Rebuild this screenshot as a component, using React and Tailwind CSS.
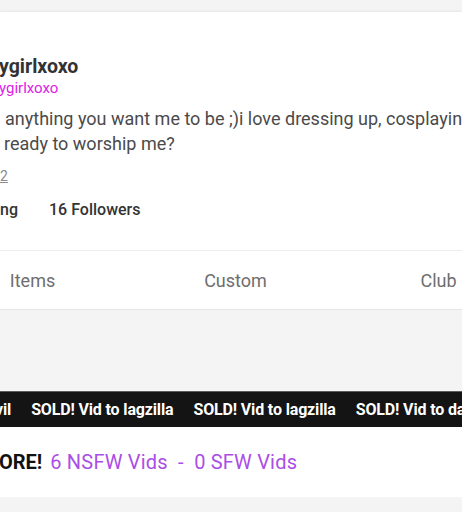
import React from 'react';

const sold = ['SOLD! Vid to lagzilla', 'SOLD! Vid to lagzilla', 'SOLD! Vid to darkdevil'];
const tabs = ['Vids', 'Items', 'Custom', 'Club'];

export default function App() {
  return (
    <div className="w-[462px] h-[512px] overflow-hidden bg-[#f4f4f4] pt-[12px] font-['Roboto',sans-serif]">
      {/* profile card */}
      <div className="bg-white shadow-[0_-1px_2px_rgba(0,0,0,0.06)]">
        <div className="pt-[43px] h-[238px]">
          <h1 className="text-[19.5px] leading-[24px] font-bold text-[#333] whitespace-nowrap -ml-[1px]">ygirlxoxo</h1>
          <p className="text-[15px] leading-[18px] text-[#e020e6] whitespace-nowrap -ml-[1px]">ygirlxoxo</p>
          <div className="mt-[9px] text-[18px] leading-[25px] text-[#4a4a4a] whitespace-nowrap">
            <p className="pl-[5px]">anything you want me to be ;)i love dressing up, cosplaying</p>
            <p className="pl-[4px]">ready to worship me?</p>
          </div>
          <p className="mt-[10px] text-[14px] leading-[20px] text-[#8a8a8a] underline">2</p>
          <div className="mt-[13px] flex text-[16px] leading-[22px] font-medium text-[#333] whitespace-nowrap">
            <span className="w-[49px]">ng</span>
            <span>16 Followers</span>
          </div>
        </div>
        <div className="border-t border-[#ececec] h-[60px] flex items-center -ml-[272px] border-b border-b-[#e6e6e6]">
          {tabs.map((t) => (
            <div key={t} className="w-[203px] shrink-0 text-center text-[18px] text-[#6e6e6e]">{t}</div>
          ))}
        </div>
      </div>

      <div className="h-[81px]" />

      {/* sold ticker */}
      <div className="h-[36px] bg-[#141414] border-t border-[#5a5a5a] flex items-center gap-[20px] whitespace-nowrap text-[16px] font-bold text-white tracking-[-0.15px]">
        <span className="-ml-[5px]">vil</span>
        {sold.map((s, i) => (
          <span key={i} className="shrink-0">{s}</span>
        ))}
      </div>

      {/* store summary */}
      <div className="bg-white h-[70px] flex items-center whitespace-nowrap text-[20px]">
        <span className="font-bold text-[#111] -ml-[1px]">ORE!</span>
        <span className="ml-[8px] text-[#a94ee6] whitespace-pre tracking-[0.2px]">6 NSFW Vids  -  0 SFW Vids</span>
      </div>
    </div>
  );
}
